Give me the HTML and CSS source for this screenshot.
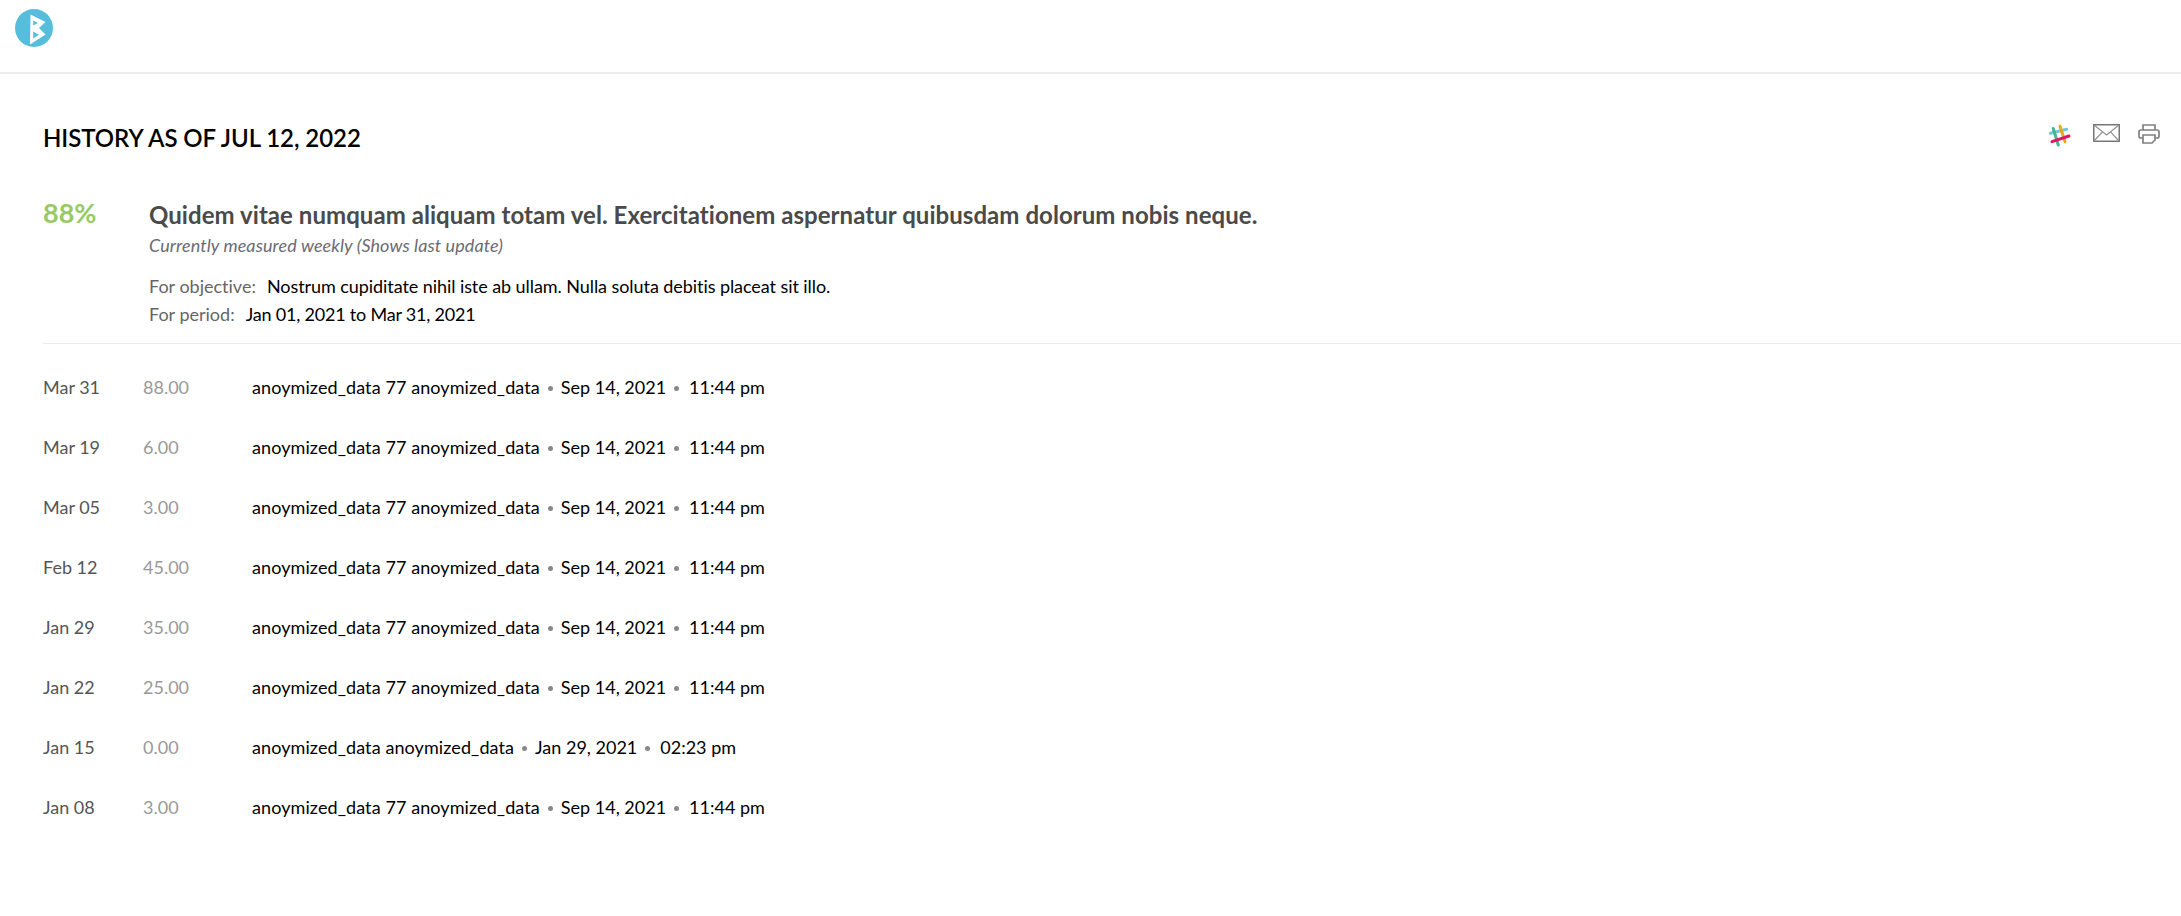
FILE: index.html
```html
<!DOCTYPE html>
<html lang="en">
<head>
<meta charset="utf-8">
<title>History</title>
<link rel="stylesheet" href="styles.css">
</head>
<body>
<header class="topbar">
  <svg class="logo" viewBox="0 0 38 38" width="38" height="38">
    <circle cx="19" cy="19" r="19" fill="#56bedb"/>
    <path d="M15.5 5.5 L30.5 13 L24 19 L30.5 25.5 L15 35.5 Z M18.2 11.5 L18.2 16.4 L23 14 Z M18.2 22.5 L18.2 29.5 L24 25.8 Z" fill="#fff" fill-rule="evenodd"/>
  </svg>
</header>
<main class="content">
  <div class="title-row">
    <h1 class="title">HISTORY AS OF JUL 12, 2022</h1>
    <div class="actions">
      <svg class="icon-slack" viewBox="0 0 26 24" width="26" height="24">
        <g stroke-width="3" stroke-linecap="round" fill="none">
          <path d="M3.3 9.3 L19.7 5.3" stroke="#70cadb"/>
          <path d="M6.2 4.5 L11.3 21" stroke="#3eb890"/>
          <path d="M13 2.3 L18 17.7" stroke="#e8a723"/>
          <path d="M5 17.7 L22 12" stroke="#e01765"/>
        </g>
      </svg>
      <svg class="icon-mail" viewBox="0 0 27 18" width="27" height="18">
        <rect x="0.75" y="0.75" width="25.5" height="16.5" fill="none" stroke="#777" stroke-width="1.5"/>
        <path d="M1 1 L13.5 11 L26 1 M1 17 L9.5 7.8 M26 17 L17.5 7.8" fill="none" stroke="#909090" stroke-width="1.2"/>
      </svg>
      <svg class="icon-print" viewBox="0 0 22 20" width="22" height="20">
        <path d="M5 6 V1 H17 V6 M5 14 H3 Q1 14 1 12 V8 Q1 6 3 6 H19 Q21 6 21 8 V12 Q21 14 19 14 H17" fill="none" stroke="#808080" stroke-width="1.7"/>
        <path d="M5 11 H17 V16 L14 19 H5 Z" fill="none" stroke="#808080" stroke-width="1.7"/>
      </svg>
    </div>
  </div>
  <section class="summary">
    <div class="percent">88%</div>
    <div class="details">
      <h2 class="kr-name">Quidem vitae numquam aliquam totam vel. Exercitationem aspernatur quibusdam dolorum nobis neque.</h2>
      <p class="measure">Currently measured weekly (Shows last update)</p>
      <p class="meta"><span class="meta-label">For objective:</span><span class="objective">Nostrum cupiditate nihil iste ab ullam. Nulla soluta debitis placeat sit illo.</span></p>
      <p class="meta"><span class="meta-label">For period:</span><span class="period">Jan 01, 2021 to Mar 31, 2021</span></p>
    </div>
  </section>
  <ul class="history">
    <li class="row"><span class="date">Mar 31</span><span class="value">88.00</span><span class="entry"><span class="who">anoymized_data 77 anoymized_data</span><i class="dot"></i>Sep 14, 2021<i class="dot"></i><span class="time">11:44 pm</span></span></li>
    <li class="row"><span class="date">Mar 19</span><span class="value">6.00</span><span class="entry"><span class="who">anoymized_data 77 anoymized_data</span><i class="dot"></i>Sep 14, 2021<i class="dot"></i><span class="time">11:44 pm</span></span></li>
    <li class="row"><span class="date">Mar 05</span><span class="value">3.00</span><span class="entry"><span class="who">anoymized_data 77 anoymized_data</span><i class="dot"></i>Sep 14, 2021<i class="dot"></i><span class="time">11:44 pm</span></span></li>
    <li class="row"><span class="date">Feb 12</span><span class="value">45.00</span><span class="entry"><span class="who">anoymized_data 77 anoymized_data</span><i class="dot"></i>Sep 14, 2021<i class="dot"></i><span class="time">11:44 pm</span></span></li>
    <li class="row"><span class="date">Jan 29</span><span class="value">35.00</span><span class="entry"><span class="who">anoymized_data 77 anoymized_data</span><i class="dot"></i>Sep 14, 2021<i class="dot"></i><span class="time">11:44 pm</span></span></li>
    <li class="row"><span class="date">Jan 22</span><span class="value">25.00</span><span class="entry"><span class="who">anoymized_data 77 anoymized_data</span><i class="dot"></i>Sep 14, 2021<i class="dot"></i><span class="time">11:44 pm</span></span></li>
    <li class="row"><span class="date">Jan 15</span><span class="value">0.00</span><span class="entry"><span class="who">anoymized_data anoymized_data</span><i class="dot"></i>Jan 29, 2021<i class="dot"></i><span class="time">02:23 pm</span></span></li>
    <li class="row"><span class="date">Jan 08</span><span class="value">3.00</span><span class="entry"><span class="who">anoymized_data 77 anoymized_data</span><i class="dot"></i>Sep 14, 2021<i class="dot"></i><span class="time">11:44 pm</span></span></li>
  </ul>
</main>
</body>
</html>
```
FILE: styles.css
```css
* { box-sizing: border-box; }
html, body { margin: 0; padding: 0; background: #fff; }
body { font-family: Lato, "Open Sans", sans-serif; color: #000; font-size: 16px; font-variant-ligatures: none; }

.topbar { height: 74px; border-bottom: 2px solid #ececec; padding: 9px 0 0 15px; }
.logo { display: block; }

.content { padding: 40px 0 0 43px; }

.title-row { display: flex; justify-content: space-between; align-items: flex-start; height: 75px; }
.title { margin: 0; font-size: 24px; line-height: 48px; font-weight: 600; color: #000; letter-spacing: -0.05px; }
.actions { display: flex; align-items: flex-start; gap: 20px; padding: 0 21px 0 0; margin-top: 10px; }
.actions svg { display: block; flex: none; }
.actions .icon-print { margin-left: -2px; }

.summary { display: flex; border-bottom: 1px solid #ececec; height: 155px; }
.percent { width: 106px; font-size: 27px; line-height: 48px; font-weight: 700; color: #97c965; }
.details { flex: 1; padding-top: 4px; }
.kr-name { margin: 0; font-size: 24px; line-height: 44px; font-weight: 700; color: #4a4a4a; letter-spacing: 0.05px; }
.measure { margin: 0 0 19px; font-size: 18px; line-height: 16px; font-style: italic; color: #6b6b75; letter-spacing: 0.09px; }
.meta { margin: 0; font-size: 18px; line-height: 28px; color: #000; }
.meta-label { color: #666; margin-right: 11px; }
.objective { letter-spacing: -0.07px; }
.period { letter-spacing: -0.2px; }

.history { list-style: none; margin: 13px 0 0; padding: 0; }
.row { display: flex; height: 60px; align-items: center; font-size: 18px; }
.date { width: 100px; color: #555; }
.value { width: 109px; color: #999; }
.entry { display: flex; align-items: center; color: #000; white-space: pre; }
.who { letter-spacing: 0.09px; }
.dot { width: 5px; height: 5px; border-radius: 50%; background: #888; margin: 2px 8px 0 8px; }
.time { margin-left: 2px; }
```
